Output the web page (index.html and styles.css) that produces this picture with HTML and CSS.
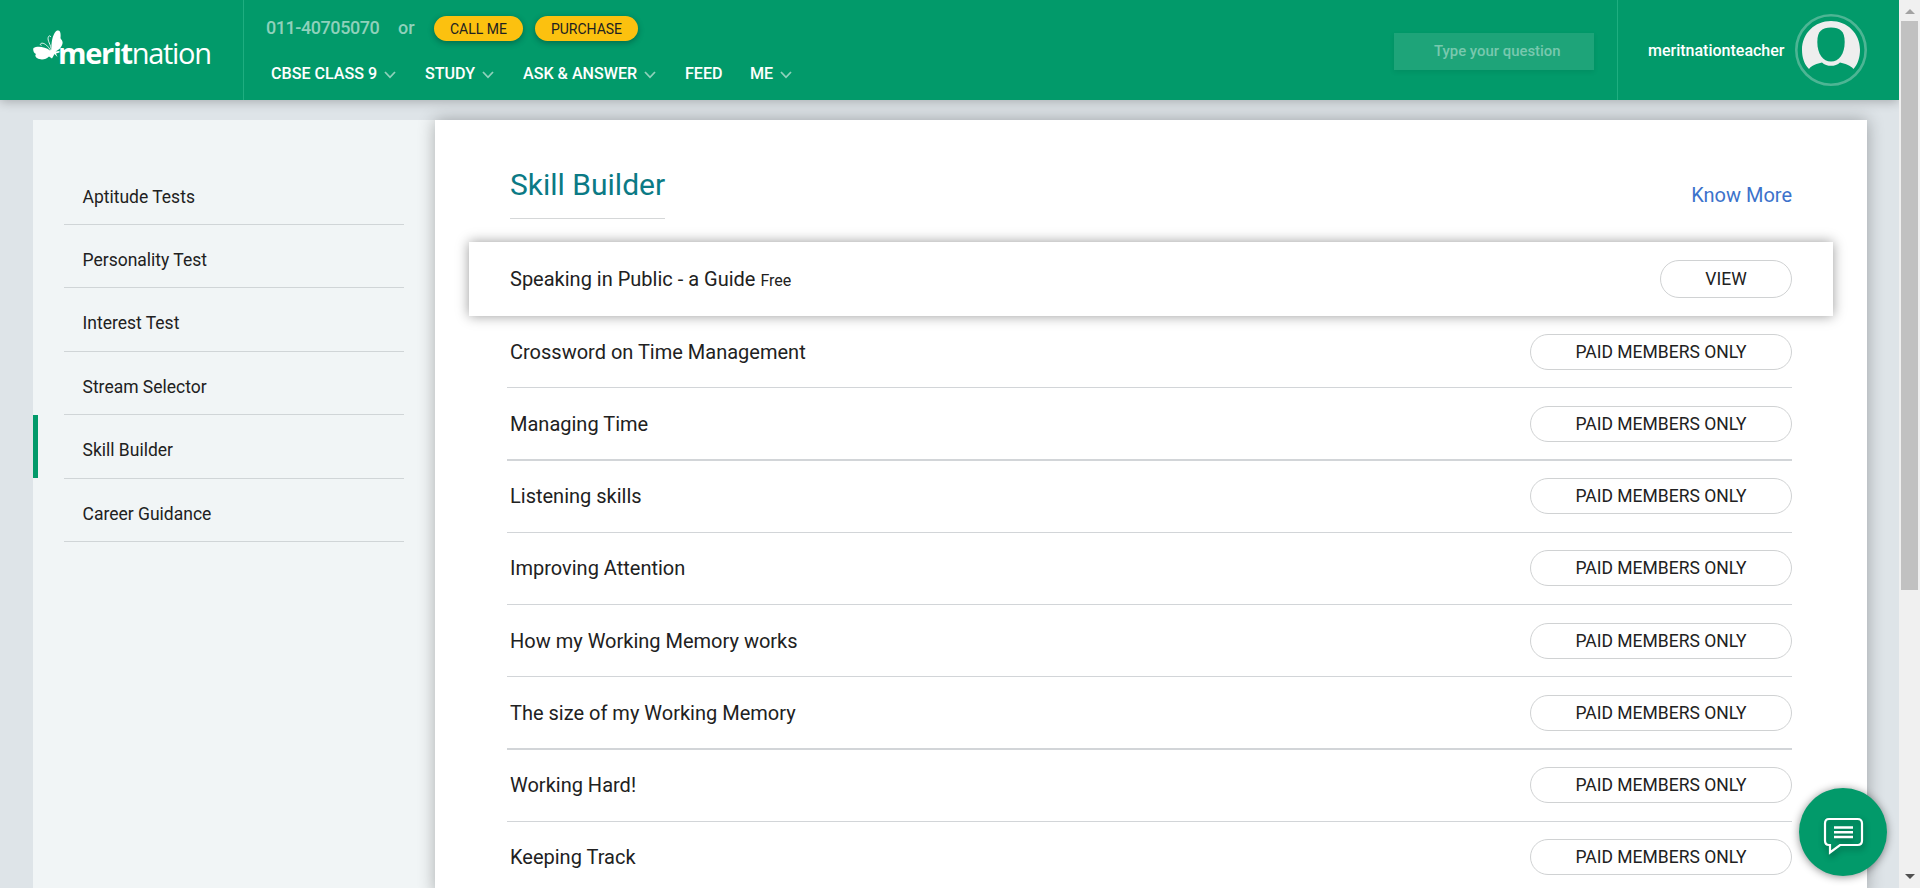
FILE: index.html
```html
<!DOCTYPE html>
<html lang="en">
<head>
<meta charset="utf-8">
<title>Skill Builder</title>
<link rel="stylesheet" href="styles.css">
</head>
<body>
<div class="page">
  <header class="header">
    <a class="logo">
      <svg class="logo-mark" width="30" height="31" viewBox="0 0 30 31" fill="#fff">
        <path d="M18.500 20C18 12 20 3 24 .6C27 -.3 28 2 27.500 8C27.600 9.500 29.800 10 29.600 13C29 17 26 20 22.500 21.500L26.500 21L26.500 22.500L23 23.500L24.500 27L21.500 24L19 28.500L16 26.500C13 29.500 8 30.500 4 28C2 26.500 2 25 3 24C.5 23 -.3 19.500 .5 18C4 15.800 12 16.500 17 20.500Z"/>
        <path d="M18.500 21C17.800 14 14.300 11 15.200 7.500C15.500 5.500 17.500 5.300 17.700 7M18 21C15 16 12 13.300 9.200 13.200C7 13.300 6.800 15.300 8.500 15.300" fill="none" stroke="#fff" stroke-width=".9"/>
      </svg>
      <span class="logo-text"><b>merit</b>nation</span>
    </a>
    <div class="header-mid">
      <div class="contact">
        <span class="phone">011-40705070</span><span class="or">or</span>
        <a class="pill call">CALL ME</a><a class="pill buy">PURCHASE</a>
      </div>
      <nav class="nav">
        <a class="n1">CBSE CLASS 9 <svg class="chev" viewBox="0 0 12 8"><path d="M1 1L6 6.300L11 1"/></svg></a>
        <a class="n2">STUDY <svg class="chev" viewBox="0 0 12 8"><path d="M1 1L6 6.300L11 1"/></svg></a>
        <a class="n3">ASK &amp; ANSWER <svg class="chev" viewBox="0 0 12 8"><path d="M1 1L6 6.300L11 1"/></svg></a>
        <a class="n4">FEED</a>
        <a class="n5">ME <svg class="chev" viewBox="0 0 12 8"><path d="M1 1L6 6.300L11 1"/></svg></a>
      </nav>
    </div>
    <div class="search">Type your question</div>
    <div class="user">
      <span class="user-name">meritnationteacher</span>
      <svg class="avatar" width="72" height="72" viewBox="0 0 72 72">
        <circle cx="36" cy="36" r="34.700" fill="none" stroke="#4db594" stroke-width="2.600"/>
        <path d="M14 55C9 50 7 43 7 36C7 19 20 7 36 7S65 19 65 36C65 43 63 50 58.500 55C55 51 50 49.500 45 48.500C43 51 39 51.800 36 51.800S29 51 27 48.500C22 49.500 17 51 14 55Z" fill="#eee"/>
        <path d="M36 13.500C45 13.500 49.700 17 49.700 28C49.700 40 44 47.500 36 47.500S22.300 40 22.300 28C22.300 17 27 13.500 36 13.500Z" fill="#029a6a"/>
      </svg>
    </div>
  </header>
  <div class="content">
    <aside class="sidebar">
      <a class="side-item">Aptitude Tests</a>
      <a class="side-item">Personality Test</a>
      <a class="side-item">Interest Test</a>
      <a class="side-item">Stream Selector</a>
      <a class="side-item active">Skill Builder</a>
      <a class="side-item">Career Guidance</a>
    </aside>
    <main class="main">
      <div class="title-row"><h1>Skill Builder</h1><a class="more">Know More</a></div>
      <div class="card"><span class="name">Speaking in Public - a Guide <small>Free</small></span><a class="btn view">VIEW</a></div>
      <div class="rows">
        <div class="row"><span class="name">Crossword on Time Management</span><a class="btn">PAID MEMBERS ONLY</a></div>
        <div class="row thick"><span class="name">Managing Time</span><a class="btn">PAID MEMBERS ONLY</a></div>
        <div class="row"><span class="name">Listening skills</span><a class="btn">PAID MEMBERS ONLY</a></div>
        <div class="row raised"><span class="name">Improving Attention</span><a class="btn">PAID MEMBERS ONLY</a></div>
        <div class="row"><span class="name">How my Working Memory works</span><a class="btn">PAID MEMBERS ONLY</a></div>
        <div class="row thick"><span class="name">The size of my Working Memory</span><a class="btn">PAID MEMBERS ONLY</a></div>
        <div class="row"><span class="name">Working Hard!</span><a class="btn">PAID MEMBERS ONLY</a></div>
        <div class="row raised"><span class="name">Keeping Track</span><a class="btn">PAID MEMBERS ONLY</a></div>
      </div>
    </main>
  </div>
</div>
<div class="scrollbar"><i class="up"></i><i class="thumb"></i><i class="down"></i></div>
<a class="chat">
  <svg width="88" height="88" viewBox="0 0 88 88" fill="none" stroke="#fff">
    <path d="M30 31H58.500Q63 31 63 35.500V52.500Q63 57 58.500 57H41L31 64.500V57H30Q26 57 26 52.500V35.500Q26 31 30 31Z" stroke-width="2.200"/>
    <path d="M35 39.500H54M35 44.300H54M35 49H54" stroke-width="2.400"/>
  </svg>
</a>
</body>
</html>
```
FILE: styles.css
```css
* { box-sizing: border-box; }
html, body { margin: 0; height: 888px; overflow: hidden; }
body { display: flex; background: #dee4e8; font-family: Roboto, "Open Sans", sans-serif; color: #212121; }
.page { width: 1899px; height: 888px; display: flex; flex-direction: column; overflow: hidden; }

.header { flex: none; height: 100px; display: flex; background: #029a6a; color: #fff; position: relative; z-index: 2; box-shadow: 0 2px 10px rgba(0,0,0,.24); }
.logo { width: 244px; padding: 30px 0 0 33px; display: flex; border-right: 1px solid #1fae80; }
.logo-mark { flex: none; }
.logo-text { font: 29px/30px "Open Sans", sans-serif; letter-spacing: -1.3px; margin: 8px 0 0 -5px; }
.logo-text b { font-weight: 700; }
.header-mid { width: 1150px; display: flex; flex-direction: column; }
.contact { display: flex; height: 56px; padding: 15px 0 0 22px; font-size: 18px; line-height: 25px; color: #8fd1bb; }
.phone { width: 132px; font-weight: 500; letter-spacing: -.45px; }
.or { width: 36px; font-weight: 500; }
.pill { height: 25px; border-radius: 13px; background: #fcc10f; color: #212121; font-size: 14px; line-height: 26px; text-align: center; box-shadow: 0 2px 6px rgba(0,0,0,.3); margin-top: 1px; }
.call { width: 89px; margin-right: 12px; }
.buy { width: 103px; }
.nav { display: flex; padding-left: 27px; font-size: 16.1px; font-weight: 500; line-height: 36px; }
.nav a { white-space: nowrap; }
.n1 { width: 154px; } .n2 { width: 98px; } .n3 { width: 162px; } .n4 { width: 65px; }
.chev { width: 12px; height: 8px; margin-left: 3px; fill: none; stroke: #8fd1bb; stroke-width: 1.8; }
.search { width: 200px; height: 37px; margin-top: 33px; background: #1ea479; color: #78c8ae; font-size: 14.9px; font-weight: 500; line-height: 36px; padding-left: 40px; box-shadow: 0 2px 5px rgba(0,0,0,.08); }
.user { width: 250px; margin-left: 23px; border-left: 1px solid #1fae80; display: flex; padding-left: 30px; }
.user-name { width: 147px; font-size: 16px; font-weight: 500; line-height: 101px; }
.avatar { flex: none; margin-top: 14px; }

.content { flex: 1; display: flex; padding: 20px 32px 0 33px; }
.sidebar { width: 402px; background: #f1f5f6; padding-top: 41.6px; display: flex; flex-direction: column; }
.side-item { height: 63.4px; margin: 0 31px; padding: 0 19px 0 18.500px; border-bottom: 1px solid #d0d5d7; font-size: 17.5px; line-height: 71px; position: relative; }
.active::before { content: ""; position: absolute; left: -31px; top: 0; width: 5px; height: 63px; background: #029a6a; }
.main { width: 1432px; background: #fff; padding: 0 34px; box-shadow: 0 0 16px rgba(0,0,0,.3); }
.title-row { height: 122px; display: flex; justify-content: space-between; padding: 40px 41px 0; }
h1 { margin: 0; height: 59px; font-size: 30px; line-height: 50px; font-weight: 400; color: #0b7a85; border-bottom: 1px solid #d5d7d8; }
.more { color: #3c72cb; font-size: 20px; line-height: 70px; }
.card { height: 74px; background: #fff; display: flex; justify-content: space-between; align-items: center; padding: 0 41px; box-shadow: 0 0 12px rgba(0,0,0,.4); }
.card small { font-size: 16px; }
.name { font-size: 20px; line-height: 36px; }
.card .name { padding-top: 1px; }
.rows { padding: 0 41px 0 38px; }
.row { height: 72px; display: flex; justify-content: space-between; padding: 18px 0 0 3px; border-bottom: 1px solid #d2d5d8; }
.thick { height: 73px; border-bottom-width: 2px; }
.thick + .row, .raised { padding-top: 17px; }
.btn { width: 262px; height: 36px; border: 1px solid #d0d2d3; border-radius: 18px; font-size: 17.5px; line-height: 34px; text-align: center; }
.view { width: 132px; height: 38px; line-height: 36px; border-radius: 19px; }

.scrollbar { width: 21px; height: 888px; background: #f0f0f0; display: flex; flex-direction: column; align-items: center; }
.up { border: 5px solid transparent; border-top: 0; border-bottom: 5px solid #a3a3a3; margin: 9px 0 7px; }
.thumb { width: 17px; height: 569px; background: #c1c1c1; }
.down { border: 5px solid transparent; border-bottom: 0; border-top: 5px solid #505050; margin-top: 284px; }
.chat { position: absolute; left: 1799px; top: 788px; width: 88px; height: 88px; border-radius: 50%; background: #029a6a; box-shadow: 0 1px 8px rgba(0,0,0,.45); }
.chat svg { filter: drop-shadow(1px 3px 3px rgba(0,0,0,.4)); }
```
